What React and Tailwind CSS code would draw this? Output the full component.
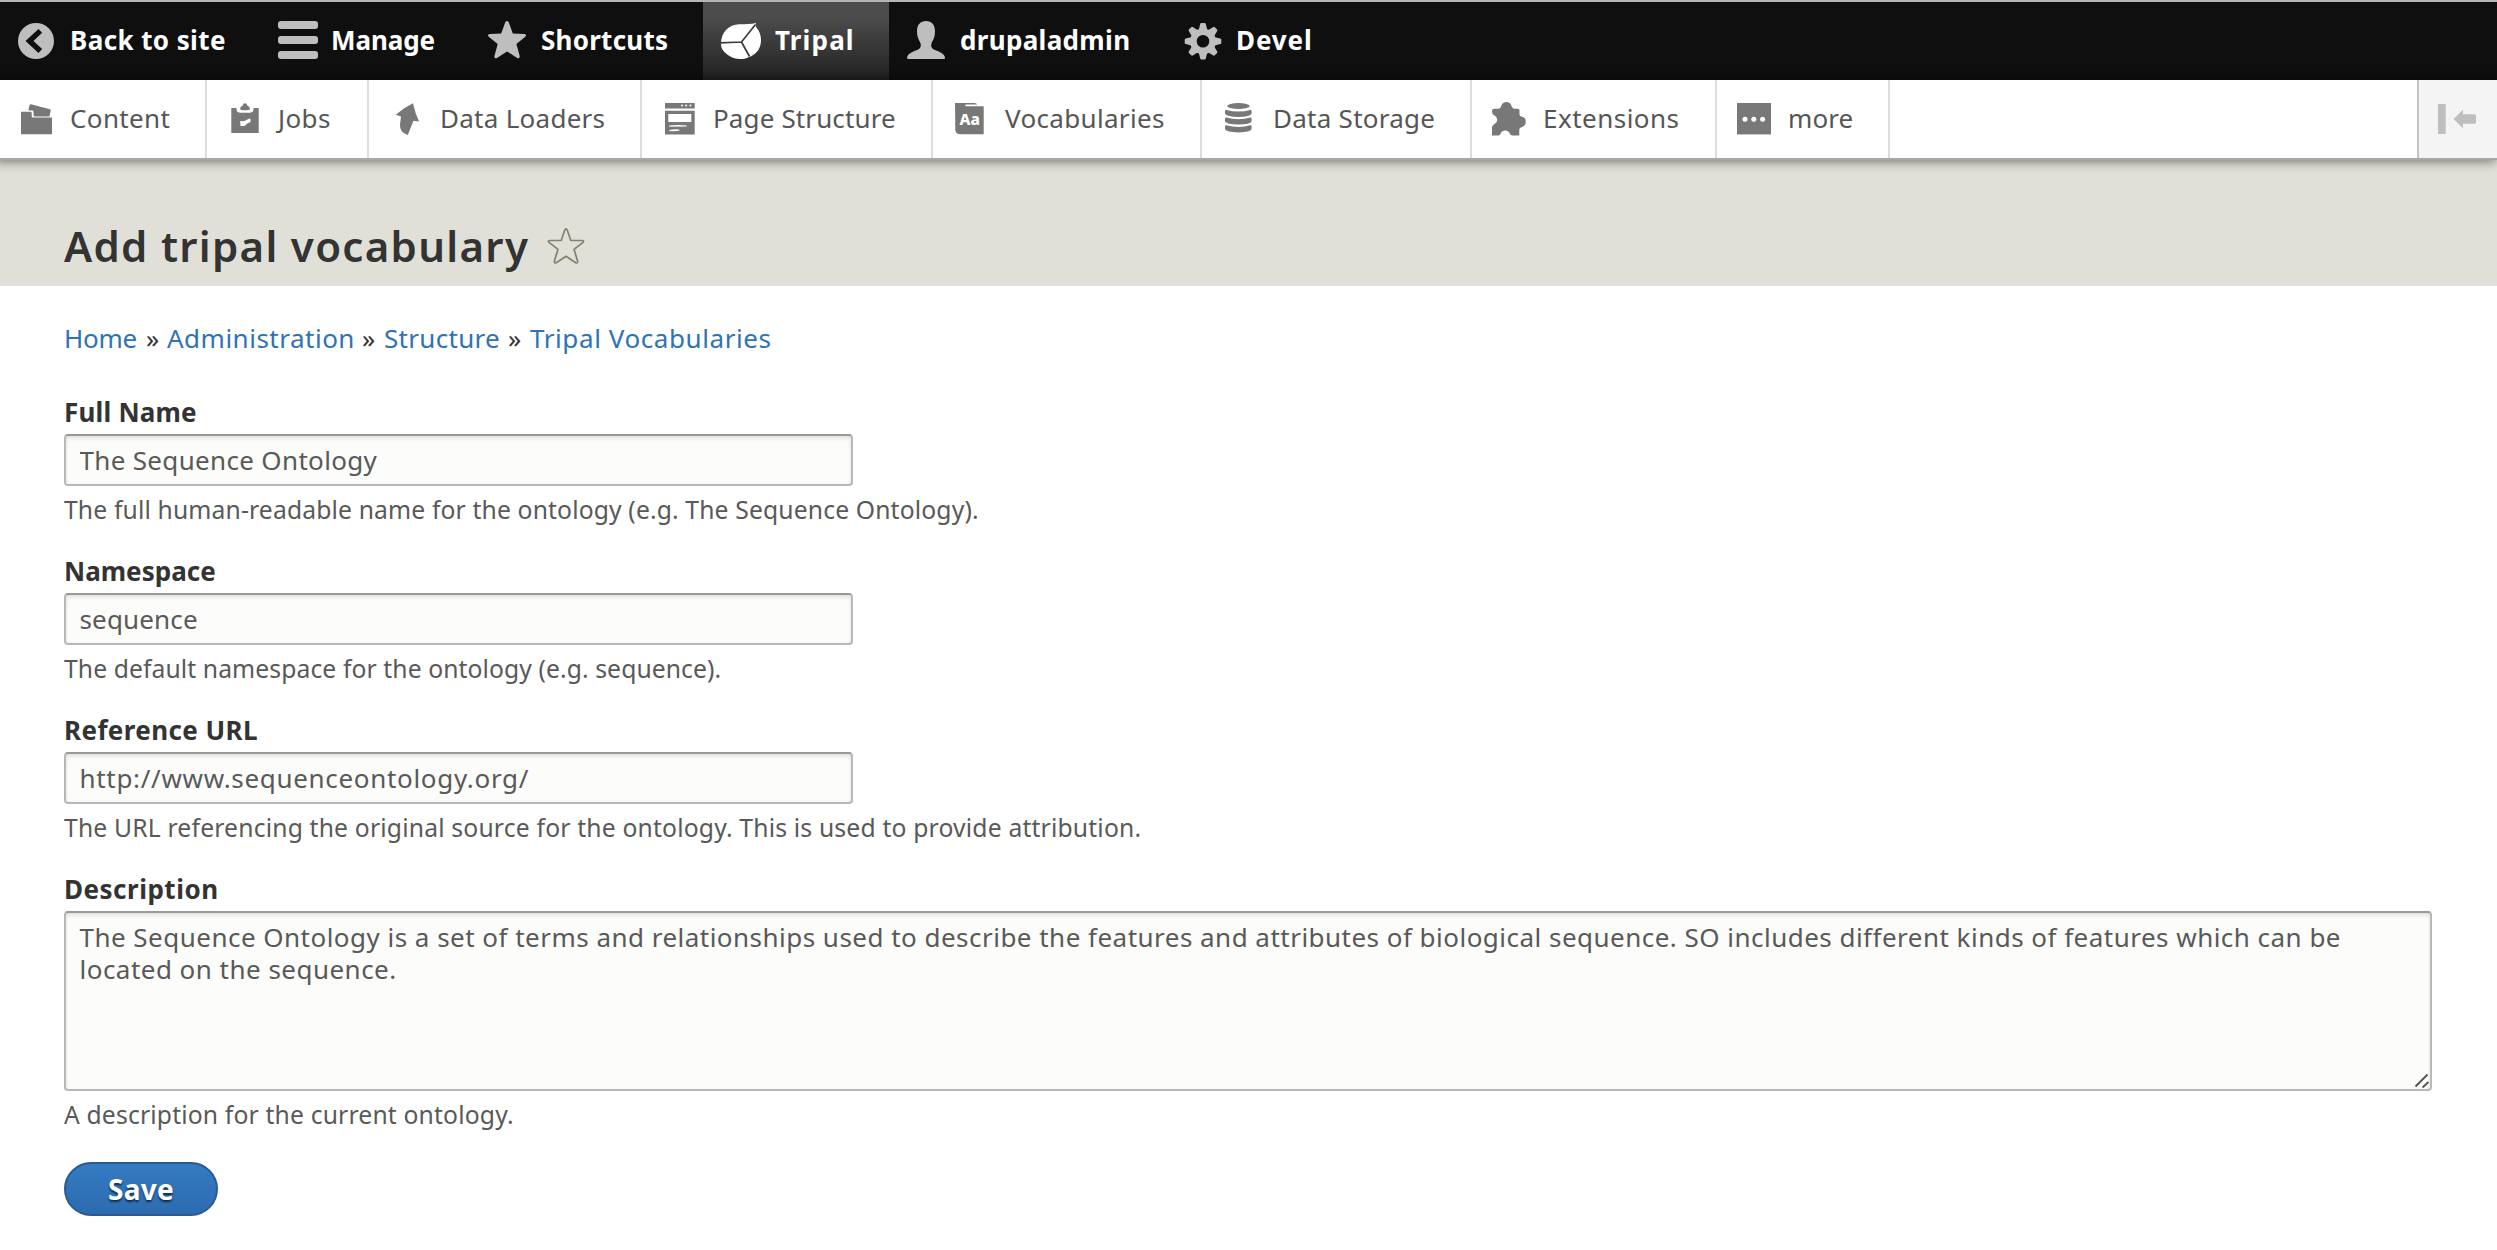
import React from 'react';

const BackIcon = () => (
  <>
    <circle cx="36" cy="39" r="18" fill="#bebebe" />
    <path d="M40.3 28.9 L29.5 39 L40.3 49" fill="none" stroke="#0f0f0f" strokeWidth="5.4" />
  </>
);

const MenuIcon = () => (
  <g fill="#bebebe">
    <rect x="18" y="19" width="40" height="8" rx="3" />
    <rect x="18" y="34" width="40" height="8" rx="3" />
    <rect x="18" y="49" width="40" height="8" rx="3" />
  </g>
);

const StarIcon = () => (
  <path
    fill="#bebebe"
    d="M37 19 C38.2 19 38.7 20.2 39.2 21.6 L42.8 31.5 L54 31.9 C56.6 32 56.6 33.6 55 34.9 L46.4 41.9 L49.6 53.6 C50 56 48.8 57 46.8 55.8 L37 49.4 L27.4 55.8 C25.4 57 24 56 24.5 53.8 L27.7 41.9 L19 34.9 C17.4 33.5 17.6 32 20 31.9 L31.2 31.5 L34.8 21.6 C35.3 20.2 35.8 19 37 19 Z"
  />
);

const TripalIcon = () => (
  <>
    <path
      fill="#fff"
      d="M18 42 C18 30 26 22.5 36 22.3 C43 22 48 22.5 52.8 21 L53 25 C56.500 29 58 33 58 38 C58 46 54 51.500 47.500 54.500 C41 58 32 58 26.500 54 C21 50.500 18 47 18 42 Z"
    />
    <path d="M17 40.800 L38.500 40 L52.500 22.500 M38.500 40 L46.500 54.500" fill="none" stroke="#3d3d3d" strokeWidth="1.700" />
  </>
);

const UserIcon = () => (
  <path
    fill="#bebebe"
    d="M37 19 C42.600 19 46 22.500 46 29.500 C46 34.500 44.500 37.500 43 40 C41.500 43.500 42 46.300 45.500 47.800 C50 49.600 54 51 55.500 54 C56.500 56.500 56 57 54.500 57 L20 57 C18 57 17.700 56.500 18.500 54 C20 51 24.500 49.600 28.500 47.800 C32 46.300 32.500 43.500 31 40 C29.500 37.500 28 34.500 28 29.500 C28 22.500 31.400 19 37 19 Z"
  />
);

const GearIcon = () => (
  <g transform="translate(38 39.300)">
    {[0, 45, 90, 135, 180, 225, 270, 315].map((a) => (
      <path key={a} fill="#bebebe" transform={`rotate(${a})`} d="M-4.600 -10 L-2.800 -17.300 Q-2.600 -18.300 -1.600 -18.300 L1.600 -18.300 Q2.600 -18.300 2.800 -17.300 L4.600 -10 Z" />
    ))}
    <circle r="9.600" fill="none" stroke="#bebebe" strokeWidth="6.600" />
  </g>
);

const ContentIcon = () => (
  <g fill="#787878">
    <path d="M21 31.700 H30.500 Q31.700 31.700 31.700 33 V36 Q31.700 37.500 33 37.500 H52 V54.300 H21 Z" />
    <path d="M28.500 29 L29.700 25 Q30 24.100 31 24.300 L50 29.300 Q51 29.700 50.700 30.500 L49.500 36.500 H35 Q33.500 36.500 33.500 35 V32 Q33.500 30.600 32 30.600 H29.400 Q28.200 30.400 28.500 29 Z" />
  </g>
);

const JobsIcon = () => (
  <>
    <path fill="#787878" d="M24.300 28 H29.500 V30.300 Q30 32.700 33 32.700 H43 Q46 32.700 46.500 30.300 V28 H51.700 V53 H24.300 Z" />
    <path fill="#787878" d="M33 28.700 Q33.500 26.200 35.500 25.700 Q36.300 23.300 38 23.300 Q39.700 23.300 40.500 25.700 Q42.500 26.200 43 28.700 Q42.500 30.300 38 30.300 Q33.500 30.300 33 28.700 Z" />
    <path fill="#fff" d="M32.700 41.300 L37.500 40.900 L43 38.300 Q44 40 43.500 42 Q40 43 37.500 46 L33.500 46 Q33.800 43 32.700 41.300 Z" />
  </>
);

const LoaderIcon = () => (
  <path fill="#787878" d="M26.700 34.700 Q35 27.500 44 23.300 Q46 33 50 41.500 L44.500 40.700 Q41.500 48 38.800 55 Q30.500 52.500 31 45 L32 36.600 Z" />
);

const PageIcon = () => (
  <>
    <path fill="#787878" d="M23 23 H52.700 V28.400 H23 Z M23 30.700 H52.700 V54.400 H23 Z" />
    <g fill="#fff">
      <rect x="26.300" y="34" width="23" height="8" />
      <path d="M27.300 45.600 Q36 44.700 44.700 45.500 V46.500 Q36 46.600 27.300 46.800 Z" />
      <path d="M27.300 50 Q33 48.700 37.300 49.500 V50.700 Q32 51.400 27.300 51 Z" />
      <circle cx="40" cy="25.500" r="1" />
      <circle cx="44.200" cy="25.500" r="1" />
      <circle cx="48.400" cy="25.500" r="1" />
    </g>
  </>
);

const VocabIcon = () => (
  <>
    <path fill="#787878" d="M22 23 H41 Q44.500 23.500 44 24.600 H33 Q31 25.500 33 26.300 H50.700 V54.300 H28 Q22.500 54.200 22.300 50 Z" />
    <text x="26.600" y="45" fill="#fff" fontFamily="Noto Sans, sans-serif" fontWeight="800" fontSize="15.500">Aa</text>
  </>
);

const StorageIcon = () => (
  <g fill="#787878">
    <ellipse cx="36.500" cy="26" rx="11.300" ry="3" />
    <path d="M23 31.500 Q23 29.500 24.500 29.900 Q30 31.500 36.500 31.500 Q43 31.500 48.200 29.900 Q49.600 29.500 49.600 31.500 V33.500 Q48.500 36.900 36.500 36.900 Q24.500 36.900 23 33.500 Z" />
    <path d="M23 39 Q23 37.200 24.500 37.600 Q30 39.200 36.500 39.200 Q43 39.200 48.200 37.600 Q49.600 37.200 49.600 39 V41.200 Q48.500 44.500 36.500 44.500 Q24.500 44.500 23 41.200 Z" />
    <path d="M23 46.700 Q23 44.900 24.500 45.300 Q30 46.900 36.500 46.900 Q43 46.900 48.200 45.300 Q49.600 44.900 49.600 46.700 V49.100 Q48.500 52.400 36.500 52.400 Q24.500 52.400 23 49.100 Z" />
  </g>
);

const PuzzleIcon = () => (
  <path
    fill="#787878"
    d="M20 31 Q20 28.700 22.500 28.700 H26.500 Q28.500 28.500 29.300 26 Q30.500 22 34.400 22 Q38.300 22 39.500 26 Q40.300 28.500 42.300 28.700 H46 Q47.500 28.700 47.500 30.500 V34.500 Q47.800 36.300 49.500 36.500 Q53.800 37.500 53.800 41.700 Q53.800 45.800 50 47 Q47.300 47.500 47.300 49.500 V55.500 H40.500 Q38.300 55.500 37.800 53.500 Q36.500 50.600 33.200 50.600 Q30 50.600 28.700 53.500 Q28.200 55.500 26 55.500 H20 V47.500 Q20.300 45.500 23 43.500 Q26 41.500 25 38.500 Q24 36.300 22 35.300 Q20 34.300 20 31 Z"
  />
);

const MoreIcon = () => (
  <>
    <rect x="20" y="23" width="34" height="31.400" fill="#787878" />
    <g fill="#fff">
      <circle cx="28" cy="39.300" r="2.500" />
      <circle cx="36.800" cy="39.300" r="2.500" />
      <circle cx="45.600" cy="39.300" r="2.500" />
    </g>
  </>
);

const topItems = [
  { label: 'Back to site', Icon: BackIcon, box: 'w-[260px]', text: '-ml-[2px] tracking-[0.4px]' },
  { label: 'Manage', Icon: MenuIcon, box: 'w-[210px]', text: '-ml-px tracking-[-0.1px]' },
  { label: 'Shortcuts', Icon: StarIcon, box: 'w-[233px]', text: '-ml-px tracking-[0.25px]' },
  { label: 'Tripal', Icon: TripalIcon, box: 'w-[186px] bg-linear-to-b from-[#4c4c4c] from-20% to-[#222222]', text: 'tracking-[1.15px]' },
  { label: 'drupaladmin', Icon: UserIcon, box: 'w-[276px]', text: '-ml-px tracking-[0.33px]' },
  { label: 'Devel', Icon: GearIcon, box: 'w-[220px]', text: '-ml-px tracking-[0.9px]' },
];

const trayItems = [
  { label: 'Content', Icon: ContentIcon, box: 'w-[207px]', text: '-ml-[2px] tracking-[0.36px]' },
  { label: 'Jobs', Icon: JobsIcon, box: 'w-[162px]', text: '-ml-px tracking-[0.39px]' },
  { label: 'Data Loaders', Icon: LoaderIcon, box: 'w-[273px]', text: '-ml-px tracking-[0.27px]' },
  { label: 'Page Structure', Icon: PageIcon, box: 'w-[291px]', text: '-ml-px tracking-[0.13px]' },
  { label: 'Vocabularies', Icon: VocabIcon, box: 'w-[269px]', text: 'tracking-[0.33px]' },
  { label: 'Data Storage', Icon: StorageIcon, box: 'w-[270px]', text: '-ml-px tracking-[0.26px]' },
  { label: 'Extensions', Icon: PuzzleIcon, box: 'w-[245px]', text: '-ml-px tracking-[0.48px]' },
  { label: 'more', Icon: MoreIcon, box: 'w-[173px]', text: '-ml-px tracking-[0.1px]' },
];

const inputBase =
  "rounded-[4px] border-2 border-[#b8b8b8] border-t-[#999999] bg-[#fcfcfa] px-[13.5px] text-[26px] text-[#595959] shadow-[inset_0_2px_4px_rgba(0,0,0,0.12)] outline-none";

function NavItem({ item, extra }) {
  const { Icon } = item;
  return (
    <a className={`flex h-[78px] shrink-0 items-center whitespace-nowrap text-[26px] leading-8 ${extra} ${item.box}`}>
      <svg className="h-[78px] w-[72px] shrink-0" viewBox="0 0 72 78">
        <Icon />
      </svg>
      <span className={`pb-[2px] ${item.text}`}>{item.label}</span>
    </a>
  );
}

function Field({ label, labelClass, help, helpClass, children }) {
  return (
    <div className="mb-[30px] flex flex-col items-start">
      <label className={`mb-[6px] text-[26px] font-bold leading-8 text-[#333333] ${labelClass}`}>{label}</label>
      {children}
      <p className={`mt-[9px] text-[24.7px] leading-[30px] text-[#595959] ${helpClass}`}>{help}</p>
    </div>
  );
}

const description =
  'The Sequence Ontology is a set of terms and relationships used to describe the features and attributes of biological sequence. SO includes different kinds of features which can be\nlocated on the sequence.';

export default function App() {
  return (
    <div className="h-[1250px] w-[2497px] overflow-hidden bg-white font-['Noto_Sans',sans-serif] text-[#333333]">
      <nav className="flex border-t-2 border-[#b4b6b6] bg-[#0f0f0f] font-bold text-white">
        {topItems.map((item) => (
          <NavItem key={item.label} item={item} extra="" />
        ))}
      </nav>
      <nav className="relative flex h-20 border-b-2 border-[#a8a8a8] bg-white text-[#565656] shadow-[-3px_0_10px_2px_rgba(0,0,0,0.45)]">
        {trayItems.map((item) => (
          <NavItem key={item.label} item={item} extra="border-r-2 border-[#dddddd]" />
        ))}
        <button className="ml-auto h-[78px] w-20 border-l-2 border-[#c4c4c4] bg-[#f4f4f4]" aria-label="Vertical orientation">
          <svg className="h-[78px] w-[78px]" viewBox="0 0 78 78" fill="#bebebe">
            <path d="M19 24 H25.700 Q26.700 24 26.700 25 V53 Q26.700 54 25.700 54 H19 Z" />
            <path d="M34.500 39 L44 29.800 V34.300 H55.500 Q57 34.300 57 35.800 V42.300 Q57 43.800 55.500 43.800 H44 V48.300 Z" />
          </svg>
        </button>
      </nav>

      <header className="flex h-[126px] items-start bg-[#e0e0d8] pl-16 pt-[60px]">
        <h1 className="w-[466px] whitespace-nowrap text-[42px] font-semibold leading-[52px] tracking-[1.3px]">Add tripal vocabulary</h1>
        <svg className="ml-[17px] mt-[7px] h-[38px] w-[38px]" viewBox="0 0 38 38" fill="none" stroke="#84816f" strokeWidth="1.700" strokeLinejoin="round">
          <path d="M19 1.800 Q19.800 1.800 20.400 3.500 L23.800 13.500 H35 Q37.600 13.700 36 15.400 L27 22.300 L30.500 33.800 Q31 36.700 28.700 35.700 L19 29.300 L9.300 35.700 Q7 36.700 7.500 33.800 L11 22.300 L2 15.400 Q0.400 13.700 3 13.500 H14.200 L17.600 3.500 Q18.200 1.800 19 1.800 Z" />
        </svg>
      </header>

      <main className="pl-16 pt-9">
        <nav className="mb-[42px] flex whitespace-nowrap text-[26px] leading-8 text-[#2e72b8]">
          <a className="w-[82px] tracking-[-0.27px]">Home</a>
          <span className="w-[21px] text-[#333333]">»</span>
          <a className="w-[195px] tracking-[0.5px]">Administration</a>
          <span className="w-[22px] text-[#333333]">»</span>
          <a className="w-[124px] tracking-[0.3px]">Structure</a>
          <span className="w-[22px] text-[#333333]">»</span>
          <a className="tracking-[0.59px]">Tripal Vocabularies</a>
        </nav>

        <Field
          label="Full Name"
          labelClass="tracking-[0.2px]"
          help="The full human-readable name for the ontology (e.g. The Sequence Ontology)."
          helpClass="tracking-[0.14px]"
        >
          <input className={`${inputBase} h-[52px] w-[789px] tracking-[0.33px]`} defaultValue="The Sequence Ontology" />
        </Field>
        <Field
          label="Namespace"
          labelClass="tracking-[0.02px]"
          help="The default namespace for the ontology (e.g. sequence)."
          helpClass="tracking-[0.09px]"
        >
          <input className={`${inputBase} h-[52px] w-[789px] tracking-[0.15px]`} defaultValue="sequence" />
        </Field>
        <Field
          label="Reference URL"
          labelClass="tracking-[0.4px]"
          help="The URL referencing the original source for the ontology. This is used to provide attribution."
          helpClass="tracking-[0.175px]"
        >
          <input className={`${inputBase} h-[52px] w-[789px] tracking-[0.68px]`} defaultValue="http://www.sequenceontology.org/" />
        </Field>
        <Field label="Description" labelClass="tracking-[0.5px]" help="A description for the current ontology." helpClass="tracking-[0.16px]">
          <div className="relative h-[180px] w-[2368px]">
            <textarea className={`${inputBase} block h-full w-full resize-none overflow-hidden pt-2 leading-8 tracking-[0.477px]`} defaultValue={description} />
            <svg className="absolute bottom-[2px] right-[2px] h-4 w-4" viewBox="0 0 16 16" fill="none" stroke="#555555" strokeWidth="1.900">
              <path d="M1.500 13.500 L13.500 1.500 M8.500 14.500 L14.500 9" />
            </svg>
          </div>
        </Field>

        <button className="mt-[2px] h-[54px] w-[154px] rounded-full border-2 border-[#2a5a94] bg-linear-to-b from-[#347bc2] to-[#2d6bb0] text-[28px] font-bold leading-8 tracking-[0.27px] text-white [text-shadow:0_2px_2px_rgba(0,0,0,0.6)]">
          Save
        </button>
      </main>
    </div>
  );
}
